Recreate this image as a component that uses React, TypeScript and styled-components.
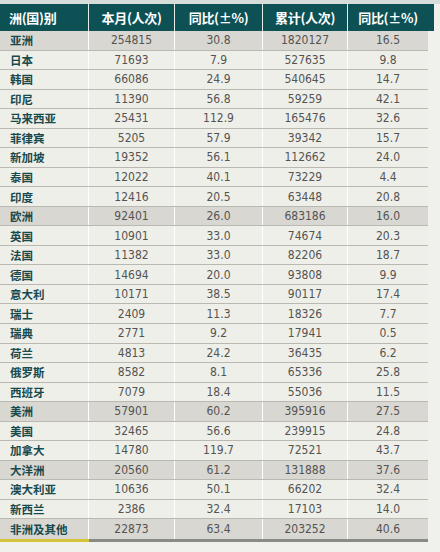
import React from "react";
import styled, { createGlobalStyle } from "styled-components";

const GlobalStyle = createGlobalStyle`
  html, body {
    margin: 0;
    padding: 0;
    background: #f0f0ec;
  }
  body {
    font-family: "Liberation Sans", "Noto Sans CJK SC", sans-serif;
  }
`;

type Row = [string, string, string, string, string, boolean?];

const rows: Row[] = [
  ["亚洲", "254815", "30.8", "1820127", "16.5", true],
  ["日本", "71693", "7.9", "527635", "9.8"],
  ["韩国", "66086", "24.9", "540645", "14.7"],
  ["印尼", "11390", "56.8", "59259", "42.1"],
  ["马来西亚", "25431", "112.9", "165476", "32.6"],
  ["菲律宾", "5205", "57.9", "39342", "15.7"],
  ["新加坡", "19352", "56.1", "112662", "24.0"],
  ["泰国", "12022", "40.1", "73229", "4.4"],
  ["印度", "12416", "20.5", "63448", "20.8"],
  ["欧洲", "92401", "26.0", "683186", "16.0", true],
  ["英国", "10901", "33.0", "74674", "20.3"],
  ["法国", "11382", "33.0", "82206", "18.7"],
  ["德国", "14694", "20.0", "93808", "9.9"],
  ["意大利", "10171", "38.5", "90117", "17.4"],
  ["瑞士", "2409", "11.3", "18326", "7.7"],
  ["瑞典", "2771", "9.2", "17941", "0.5"],
  ["荷兰", "4813", "24.2", "36435", "6.2"],
  ["俄罗斯", "8582", "8.1", "65336", "25.8"],
  ["西班牙", "7079", "18.4", "55036", "11.5"],
  ["美洲", "57901", "60.2", "395916", "27.5", true],
  ["美国", "32465", "56.6", "239915", "24.8"],
  ["加拿大", "14780", "119.7", "72521", "43.7"],
  ["大洋洲", "20560", "61.2", "131888", "37.6", true],
  ["澳大利亚", "10636", "50.1", "66202", "32.4"],
  ["新西兰", "2386", "32.4", "17103", "14.0"],
  ["非洲及其他", "22873", "63.4", "203252", "40.6", true],
];

const Page = styled.div`
  padding-top: 4px;
  width: 440px;
  background: linear-gradient(#d6dcd9 0, #d6dcd9 4px, #f0f0ec 4px);
  min-height: 552px;
  box-sizing: border-box;
`;

const Header = styled.div`
  display: grid;
  grid-template-columns: 89px 86px 88px 85px 86px;
  height: 27px;
  width: 434px;
  background: #0d5154;
`;

const HeadCell = styled.div<{ $left?: boolean; $last?: boolean }>`
  display: flex;
  align-items: center;
  justify-content: ${(p) => (p.$left ? "flex-start" : "center")};
  padding-left: ${(p) => (p.$left ? "9px" : "0")};
  padding-right: ${(p) => (p.$last ? "6px" : "0")};
  border-right: ${(p) => (p.$last ? "none" : "1px solid #e8ece9")};
  color: #ffffff;
  font-family: "Noto Sans CJK SC", "Liberation Sans", sans-serif;
  font-weight: 700;
  font-size: 13px;
  letter-spacing: -0.3px;
`;

const Body = styled.div`
  width: 428px;
`;

const BodyRow = styled.div<{ $hi?: boolean }>`
  display: grid;
  grid-template-columns: 89px 86px 88px 85px 80px;
  height: 19.54px;
  box-sizing: border-box;
  background: ${(p) => (p.$hi ? "#d9d7d2" : "#efefea")};
  border-bottom: 1px solid #b9b9b2;
  &:last-child {
    border-bottom: none;
  }
`;

const NameCell = styled.div`
  display: flex;
  align-items: center;
  padding-left: 10px;
  border-right: 1px solid #ffffff;
  color: #174a4d;
  font-family: "Noto Sans CJK SC", sans-serif;
  font-weight: 600;
  font-size: 11.5px;
`;

const NumCell = styled.div<{ $last?: boolean }>`
  display: flex;
  align-items: center;
  justify-content: center;
  border-right: ${(p) => (p.$last ? "none" : "1px solid #ffffff")};
  color: #545452;
  font-family: "Liberation Sans Narrow", "DejaVu Sans Condensed", "Liberation Sans", sans-serif;
  font-size: 12px;
`;

const Footer = styled.div`
  display: grid;
  grid-template-columns: 89px 339px;
  height: 3px;
  width: 428px;
`;

const FootLine = styled.div<{ $color: string }>`
  background: ${(p) => p.$color};
`;

export default function App() {
  return (
    <>
      <GlobalStyle />
      <Page>
        <Header>
          <HeadCell $left>洲(国)别</HeadCell>
          <HeadCell>本月(人次)</HeadCell>
          <HeadCell>同比(±%)</HeadCell>
          <HeadCell>累计(人次)</HeadCell>
          <HeadCell $last>同比(±%)</HeadCell>
        </Header>
        <Body>
          {rows.map((r) => (
            <BodyRow key={r[0]} $hi={r[5]}>
              <NameCell>{r[0]}</NameCell>
              <NumCell>{r[1]}</NumCell>
              <NumCell>{r[2]}</NumCell>
              <NumCell>{r[3]}</NumCell>
              <NumCell $last>{r[4]}</NumCell>
            </BodyRow>
          ))}
        </Body>
        <Footer>
          <FootLine $color="#d4c43a" />
          <FootLine $color="#8b8b86" />
        </Footer>
      </Page>
    </>
  );
}
